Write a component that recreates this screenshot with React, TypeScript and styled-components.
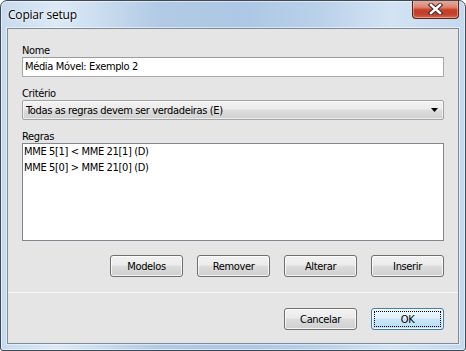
import React from "react";
import styled, { createGlobalStyle } from "styled-components";

const Global = createGlobalStyle`
  html, body { margin: 0; padding: 0; background: #ffffff; }
  body { font-family: Tahoma, "DejaVu Sans Condensed", "DejaVu Sans", sans-serif; }
`;

const UI_FONT = `Tahoma, "DejaVu Sans Condensed", "DejaVu Sans", sans-serif`;

const Window = styled.div`
  width: 466px;
  height: 351px;
  box-sizing: border-box;
  border: 1px solid #3c4a58;
  border-radius: 7px 7px 3px 3px;
  background: linear-gradient(
    90deg,
    #c6daef 0%,
    #dce9f6 12%,
    #c9dcef 22%,
    #b2cae5 34%,
    #adc7e4 52%,
    #b9d0ea 68%,
    #d3e3f3 84%,
    #c4d8ee 100%
  );
  box-shadow: inset 0 0 0 1px rgba(255, 255, 255, 0.55);
  display: flex;
  flex-direction: column;
  overflow: hidden;
`;

const TitleBar = styled.div`
  height: 27px;
  display: flex;
  align-items: flex-start;
  justify-content: space-between;
  padding-left: 7px;
`;

const Title = styled.div`
  font-family: "Segoe UI", "Open Sans", sans-serif;
  font-size: 12px;
  letter-spacing: -0.2px;
  color: #000;
  line-height: 16px;
  margin-top: 6px;
  text-shadow: 0 0 6px rgba(255, 255, 255, 0.9), 0 0 2px rgba(255, 255, 255, 0.9);
`;

const CloseButton = styled.div`
  width: 45px;
  height: 18px;
  margin-right: 6px;
  margin-top: -1px;
  border: 1px solid #5b2419;
  border-top: none;
  border-radius: 0 0 4px 4px;
  background: linear-gradient(
    180deg,
    #e9ad9f 0%,
    #dd8570 40%,
    #c73e27 55%,
    #c2412a 80%,
    #d66a52 100%
  );
  box-shadow: inset 0 0 0 1px rgba(255, 200, 190, 0.5);
  display: flex;
  align-items: center;
  justify-content: center;
`;

const Client = styled.div`
  flex: 1;
  margin: 0 6px 6px 6px;
  border: 1px solid #7e8c9a;
  background: #e5e5e5;
  display: flex;
  flex-direction: column;
  box-shadow: 0 0 0 1px rgba(255, 255, 255, 0.5);
`;

const Form = styled.div`
  padding: 15px 14px 15px 14px;
  display: flex;
  flex-direction: column;
  border-bottom: 1px solid #f8f8f8;
`;

const Field = styled.div<{ $gap?: number }>`
  display: flex;
  flex-direction: column;
  margin-bottom: ${(p) => p.$gap ?? 10}px;
`;

const Label = styled.div`
  font-family: ${UI_FONT};
  font-size: 11px;
  letter-spacing: -0.35px;
  line-height: 13px;
  color: #000;
`;

const TextBox = styled.div`
  height: 20px;
  box-sizing: border-box;
  border: 1px solid #a9a9a9;
  border-top-color: #9c9c9c;
  background: #fff;
  font-family: ${UI_FONT};
  font-size: 11px;
  letter-spacing: -0.35px;
  line-height: 17px;
  padding-left: 2px;
  color: #000;
`;

const Combo = styled.div`
  height: 20px;
  box-sizing: border-box;
  border: 1px solid #a3a3a3;
  border-radius: 2px;
  background: linear-gradient(180deg, #f2f2f2 0%, #ebebeb 45%, #dddddd 50%, #d0d0d0 100%);
  box-shadow: inset 0 0 0 1px rgba(255, 255, 255, 0.6);
  display: flex;
  align-items: center;
  justify-content: space-between;
  padding: 0 4px 0 3px;
  font-family: ${UI_FONT};
  font-size: 11px;
  letter-spacing: -0.35px;
  color: #000;
`;

const ListBox = styled.div`
  height: 98px;
  box-sizing: border-box;
  border: 1px solid #828790;
  background: #fff;
  padding-left: 1px;
`;

const ListItem = styled.div`
  font-family: ${UI_FONT};
  font-size: 11px;
  letter-spacing: -0.35px;
  line-height: 16px;
  color: #000;
  white-space: pre;
`;

const ButtonRow = styled.div`
  display: flex;
  justify-content: flex-end;
  gap: 14px;
`;

const Footer = styled.div`
  padding: 15px 14px 0 14px;
`;

const Button = styled.div<{ $default?: boolean }>`
  width: 73px;
  height: 22px;
  box-sizing: border-box;
  border: 1px solid ${(p) => (p.$default ? "#3c7fb1" : "#707070")};
  border-radius: 3px;
  background: ${(p) =>
    p.$default
      ? "linear-gradient(180deg, #eef7fc 0%, #e1f1fb 45%, #cbe7f8 50%, #b9def4 100%)"
      : "linear-gradient(180deg, #f2f2f2 0%, #ebebeb 45%, #dddddd 50%, #cfcfcf 100%)"};
  box-shadow: inset 0 0 0 1px rgba(255, 255, 255, 0.75);
  display: flex;
  align-items: center;
  justify-content: center;
  font-family: ${UI_FONT};
  font-size: 11px;
  letter-spacing: -0.35px;
  color: #000;
  position: relative;
`;

const FocusRing = styled.div`
  position: absolute;
  inset: 2px;
  border: 1px dotted #000;
`;

const Arrow = () => (
  <svg width="8" height="5" viewBox="0 0 8 5">
    <path d="M0 0 H7 L3.5 4 Z" fill="#000" />
  </svg>
);

const CloseX = () => (
  <svg width="15" height="12" viewBox="0 0 15 12">
    <path d="M3 2 L12 10 M12 2 L3 10" stroke="#3e2a2a" strokeWidth="4.4" strokeLinecap="square" />
    <path d="M3 2 L12 10 M12 2 L3 10" stroke="#ffffff" strokeWidth="2.4" strokeLinecap="square" />
  </svg>
);

export default function App() {
  return (
    <>
      <Global />
      <Window>
        <TitleBar>
          <Title>Copiar setup</Title>
          <CloseButton>
            <CloseX />
          </CloseButton>
        </TitleBar>
        <Client>
          <Form>
            <Field>
              <Label>Nome</Label>
              <TextBox>Média Móvel: Exemplo 2</TextBox>
            </Field>
            <Field>
              <Label>Critério</Label>
              <Combo>
                <span>Todas as regras devem ser verdadeiras (E)</span>
                <Arrow />
              </Combo>
            </Field>
            <Field $gap={14}>
              <Label>Regras</Label>
              <ListBox>
                <ListItem>MME 5[1] &lt; MME 21[1] (D)</ListItem>
                <ListItem>MME 5[0] &gt; MME 21[0] (D)</ListItem>
              </ListBox>
            </Field>
            <ButtonRow>
              <Button>Modelos</Button>
              <Button>Remover</Button>
              <Button>Alterar</Button>
              <Button>Inserir</Button>
            </ButtonRow>
          </Form>
          <Footer>
            <ButtonRow>
              <Button>Cancelar</Button>
              <Button $default>
                OK
                <FocusRing />
              </Button>
            </ButtonRow>
          </Footer>
        </Client>
      </Window>
    </>
  );
}
